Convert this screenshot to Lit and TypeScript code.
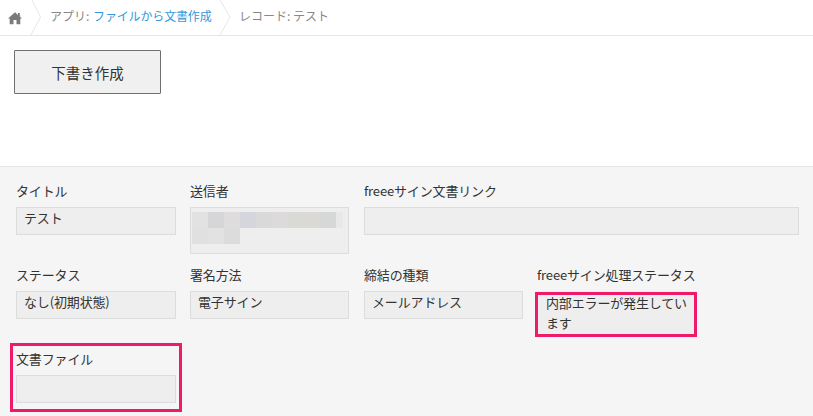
import { LitElement, html, css } from "lit";
import { customElement } from "lit/decorators.js";

const MOSAIC: string[] = [
  "#e2e2e2", "#d6d6d8", "#dedcdc", "#d5d6dc", "#d9d9d9", "#dcdada", "#d9d9d6", "#dad9d6", "#d6d8d7", "#e8e8e8",
  "#e0e0e0", "#e2e2e2", "#dcdcdc",
];

@customElement("app-root")
export class AppRoot extends LitElement {
  static styles = css`
    :host {
      display: block;
      width: 813px;
      height: 416px;
      overflow: hidden;
      background: #fff;
      font-family: "Noto Sans CJK JP", "Liberation Sans", sans-serif;
      font-size: 13px;
      color: #333;
      position: relative;
    }
    .crumbs {
      display: flex;
      height: 35px;
      border-bottom: 1px solid #e3e7e8;
      line-height: 31px;
      font-size: 12px;
      color: #888;
    }
    .home {
      width: 30px;
      display: flex;
      align-items: center;
      justify-content: center;
    }
    .chev {
      width: 12px;
      height: 35px;
      flex: none;
    }
    .crumb {
      padding: 0 0 0 8px;
      white-space: nowrap;
    }
    .crumb.app { width: 169px; }
    .crumb a { margin-left: 1px; letter-spacing: -0.15px; }
    a { color: #3498db; text-decoration: none; }
    .action { padding: 14px 14px 0; height: 116px; }
    .btn {
      box-sizing: border-box;
      width: 147px;
      height: 44px;
      border: 1px solid #6f6f6f;
      border-radius: 1px;
      background: #f0f0f0;
      color: #333;
      font-family: inherit;
      font-size: 14.5px;
      padding: 0;
    }
    .panel {
      box-sizing: border-box;
      height: 250px;
      background: #f5f5f5;
      border-top: 1px solid #e3e7e8;
      padding: 15px 0 0 16px;
      letter-spacing: -0.15px;
    }
    .row { display: flex; height: 84px; }
    .field { flex: none; width: 174px; }
    .field.w3 { width: 173px; }
    .label {
      height: 25px;
      line-height: 18px;
      white-space: nowrap;
    }
    .box {
      box-sizing: border-box;
      width: 160px;
      height: 28px;
      padding: 0 7px;
      background: #eee;
      border: 1px solid #dcdcdc;
      line-height: 20px;
    }
    .box.mid { width: 159px; }
    .box.tall { height: 47px; padding: 4px 1px; }
    .box.wide { width: 435px; }
    .field.link { width: auto; }
    .status {
      width: 160px;
      height: 44px;
      box-sizing: border-box;
      padding: 2px 6px 2px 9px;
      line-height: 20px;
      background: #eee;
    }
    .mosaic {
      display: grid;
      grid-template-columns: repeat(9, 16px) 7px;
      grid-auto-rows: 16px;
    }
    .hl {
      position: absolute;
      box-sizing: border-box;
      border: 3px solid #f01a6a;
      pointer-events: none;
    }
    .hl.a { left: 535px; top: 292px; width: 162px; height: 45px; }
    .hl.b { left: 10px; top: 343px; width: 172px; height: 69px; }
  `;

  private chev(top: number, tip: number, bottom: number) {
    return html`<svg class="chev" viewBox="0 0 12 35" fill="none" stroke="#e3e7e8" stroke-width="1"><path d="M${top} 0 L${tip} 17 L${bottom} 35"/></svg>`;
  }

  render() {
    return html`
      <div class="crumbs">
        <div class="home">
          <svg width="14" height="14" viewBox="0 0 14 14" fill="#7b7b7b"><path d="M7 1.2 L10 3.9 V2 H11.8 V5.5 L14 7.5 H12.3 V13.2 H8.5 V9 H5.5 V13.2 H1.7 V7.5 H0 Z"/></svg>
        </div>
        ${this.chev(2, 10.5, 1)}
        <div class="crumb app">アプリ: <a href="#">ファイルから文書作成</a></div>
        ${this.chev(1, 11, 1)}
        <div class="crumb">レコード: テスト</div>
      </div>
      <div class="action"><button class="btn">下書き作成</button></div>
      <div class="panel">
        <div class="row">
          <div class="field"><div class="label">タイトル</div><div class="box">テスト</div></div>
          <div class="field">
            <div class="label">送信者</div>
            <div class="box mid tall">
              <div class="mosaic">${MOSAIC.map((c) => html`<span style="background:${c}"></span>`)}</div>
            </div>
          </div>
          <div class="field link"><div class="label">freeeサイン文書リンク</div><div class="box wide"></div></div>
        </div>
        <div class="row">
          <div class="field"><div class="label">ステータス</div><div class="box">なし(初期状態)</div></div>
          <div class="field"><div class="label">署名方法</div><div class="box mid">電子サイン</div></div>
          <div class="field w3"><div class="label">締結の種類</div><div class="box mid">メールアドレス</div></div>
          <div class="field"><div class="label">freeeサイン処理ステータス</div><div class="status">内部エラーが発生しています</div></div>
        </div>
        <div class="row">
          <div class="field"><div class="label">文書ファイル</div><div class="box"></div></div>
        </div>
      </div>
      <div class="hl a"></div>
      <div class="hl b"></div>
    `;
  }
}
